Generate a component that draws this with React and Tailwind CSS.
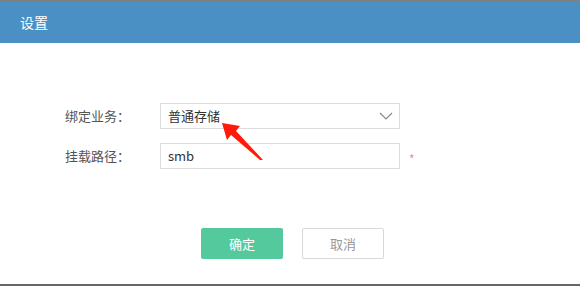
import React from "react";

export default function App() {
  return (
    <div
      className="relative w-[580px] h-[286px] bg-white flex flex-col overflow-hidden"
      style={{ fontFamily: '"Noto Sans CJK SC", "Noto Sans", sans-serif' }}
    >
      <div className="h-[2px] bg-[#7f7f7f]" />
      <div className="h-[41px] bg-[#4b90c4] flex items-center pl-[20px] text-white text-[14px]">
        设置
      </div>
      <div className="flex-1 flex flex-col">
        <div className="h-[60px]" />
        <div className="flex items-center h-[26px]">
          <div className="w-[160px] pl-[65px] text-[13px] text-[#555]">绑定业务：</div>
          <div className="w-[240px] h-[26px] border border-[#dcdcdc] flex items-center justify-between pl-[7px] pr-[6px] text-[13px] text-[#333]">
            <span>普通存储</span>
            <svg width="14" height="8" viewBox="0 0 14 8" fill="none">
              <path d="M1 1 L7 7 L13 1" stroke="#888" strokeWidth="1.2" />
            </svg>
          </div>
        </div>
        <div className="h-[14px]" />
        <div className="flex items-center h-[26px]">
          <div className="w-[160px] pl-[65px] text-[13px] text-[#555]">挂载路径：</div>
          <div className="w-[240px] h-[26px] border border-[#dcdcdc] flex items-center pl-[7px] text-[13px] text-[#333]">
            smb
          </div>
          <span className="ml-[9px] mt-[6px] text-[#f88] text-[12px] leading-none">*</span>
        </div>
        <div className="h-[59px]" />
        <div className="flex pl-[201px] gap-[19px]">
          <div className="w-[82px] h-[31px] bg-[#55c99e] rounded-[2px] text-white text-[13px] flex items-center justify-center">
            确定
          </div>
          <div className="w-[82px] h-[31px] border border-[#d9d9d9] rounded-[2px] text-[#999] text-[13px] flex items-center justify-center">
            取消
          </div>
        </div>
      </div>
      <div className="h-[2px] bg-[#666]" />
      <svg className="absolute left-0 top-0" width="580" height="286" viewBox="0 0 580 286">
        <polygon points="222,123 240,126 236,131 263,160 260,160 231,135 227,140" fill="#ff1a0a" />
      </svg>
    </div>
  );
}
